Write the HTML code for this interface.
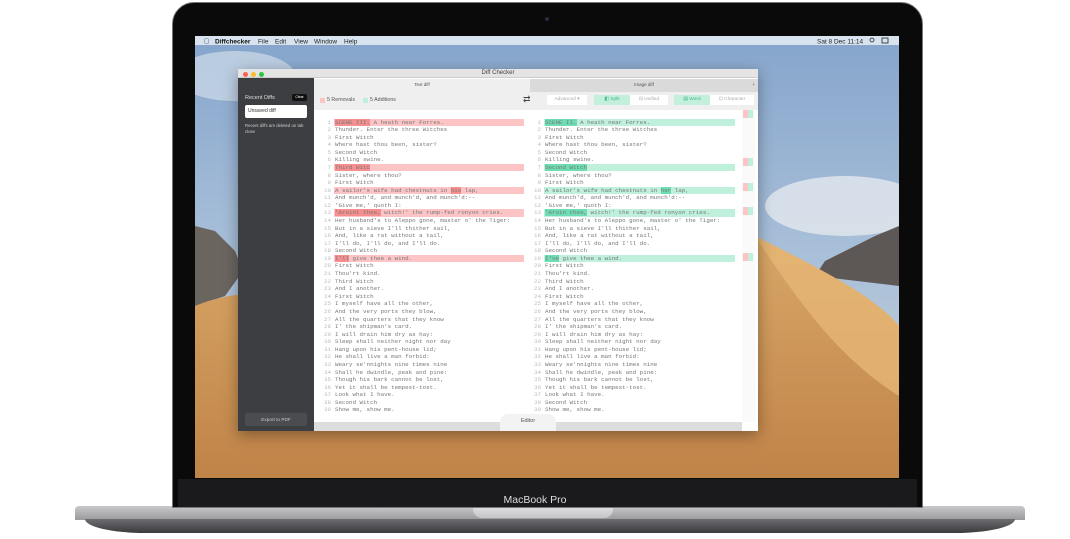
<!DOCTYPE html>
<html><head><meta charset="utf-8"><style>
*{margin:0;padding:0;box-sizing:border-box}
body{width:1070px;height:539px;background:#fff;position:relative;overflow:hidden;font-family:"Liberation Sans",sans-serif}
.a{position:absolute}
.code{font-family:"Liberation Mono",monospace;font-size:5.85px;color:#777;white-space:pre;line-height:7.58px}
.row{position:absolute;height:7.4px}
.rm{background:#fcc4c4}
.ad{background:#bff0dc}
.rs{background:#f58e8e}
.as{background:#6fddb4}
</style></head><body>
<div class="a" style="left:75px;top:506px;width:950px;height:14px;border-radius:4px 4px 0 0;background:linear-gradient(#c9c9cb,#9a9a9d)"></div>
<div class="a" style="left:85px;top:519px;width:930px;height:14px;border-radius:0 0 60px 60px/0 0 14px 14px;background:linear-gradient(#6e6e72,#3a3a3d)"></div>
<div class="a" style="left:473px;top:506px;width:140px;height:12px;border-radius:0 0 9px 9px;background:linear-gradient(#e2e2e4,#c4c4c6)"></div>
<div class="a" style="left:172px;top:2px;width:751px;height:506px;border-radius:22px 22px 0 0;background:#0a0a0a;border:1px solid #777"></div>
<div class="a" style="left:545px;top:17px;width:4px;height:4px;border-radius:50%;background:#2a2a40"></div>
<div class="a" style="left:178px;top:479px;width:739px;height:28px;background:#1a1a1c"></div>
<div class="a" style="left:0;top:494px;width:1070px;text-align:center;color:#ddd;font-size:10.5px">MacBook Pro</div>
<svg class="a" style="left:195px;top:36px" width="704" height="442" viewBox="0 0 704 442">
<defs>
<linearGradient id="sky" x1="0" y1="0" x2="0" y2="1"><stop offset="0" stop-color="#86a5cc"/><stop offset="0.5" stop-color="#a9c0d9"/><stop offset="1" stop-color="#c9cfd6"/></linearGradient>
<linearGradient id="dune" x1="0" y1="0" x2="0" y2="1"><stop offset="0" stop-color="#d8a767"/><stop offset="1" stop-color="#c08348"/></linearGradient>
</defs>
<rect width="704" height="442" fill="url(#sky)"/>
<ellipse cx="40" cy="40" rx="60" ry="25" fill="#cfdbe8" opacity=".7"/>
<ellipse cx="650" cy="170" rx="80" ry="30" fill="#e3e8ee" opacity=".8"/>
<polygon points="0,190 20,195 40,215 48,235 30,260 0,270" fill="#6b6560"/>
<polygon points="704,190 680,200 650,215 630,225 620,240 704,250" fill="#5d5856"/>
<path d="M0,270 C60,245 150,255 260,300 L560,200 C620,230 680,260 704,290 L704,442 L0,442Z" fill="url(#dune)"/>
<path d="M560,200 C600,260 640,320 704,360 L704,290 C680,260 620,230 560,200Z" fill="#e6b676" opacity=".8"/>
<rect y="0" width="704" height="9" fill="#d7e4ef"/>
<text x="9" y="7.5" font-size="7" fill="#111">&#63743;</text>
<text x="20" y="7.5" font-size="6.5" font-weight="bold" fill="#111" font-family="Liberation Sans">Diffchecker</text>
<text x="63" y="7.5" font-size="6.5" fill="#222" font-family="Liberation Sans">File</text>
<text x="80" y="7.5" font-size="6.5" fill="#222" font-family="Liberation Sans">Edit</text>
<text x="99" y="7.5" font-size="6.5" fill="#222" font-family="Liberation Sans">View</text>
<text x="119" y="7.5" font-size="6.5" fill="#222" font-family="Liberation Sans">Window</text>
<text x="149" y="7.5" font-size="6.5" fill="#222" font-family="Liberation Sans">Help</text>
<text x="622" y="7.5" font-size="6.5" fill="#222" font-family="Liberation Sans">Sat 8 Dec  11:14</text>
<circle cx="677" cy="4" r="2" fill="none" stroke="#222" stroke-width=".8"/>
<rect x="687" y="2" width="6" height="5" fill="none" stroke="#222" stroke-width=".8"/>
</svg>
<div class="a" style="left:238px;top:69px;width:520px;height:362px;background:#fff;box-shadow:0 4px 14px rgba(0,0,0,.35)"></div>
<div class="a" style="left:238px;top:69px;width:520px;height:9px;background:#e4e4e4;border-bottom:1px solid #ccc;font-size:6px;color:#444;text-align:center;line-height:9px">Diff Checker</div>
<div class="a" style="left:243px;top:71.5px;width:5px;height:5px;border-radius:50%;background:#fc5f57"></div>
<div class="a" style="left:251px;top:71.5px;width:5px;height:5px;border-radius:50%;background:#fdbc2e"></div>
<div class="a" style="left:259px;top:71.5px;width:5px;height:5px;border-radius:50%;background:#29c940"></div>
<div class="a" style="left:238px;top:78px;width:76px;height:353px;background:#3c3e41"></div>
<div class="a" style="left:245px;top:95px;font-size:5.5px;color:#ddd">Recent Diffs</div>
<div class="a" style="left:292px;top:94px;width:15px;height:7px;border-radius:2px;background:#111;color:#fff;font-size:3.5px;text-align:center;line-height:7px">Clear</div>
<div class="a" style="left:245px;top:105px;width:62px;height:13px;border-radius:2px;background:#fff;font-size:5px;color:#333;padding:3px 3px;line-height:7px">Unsaved diff</div>
<div class="a" style="left:245px;top:123px;width:66px;font-size:4.3px;color:#ccc;line-height:6px">Recent diffs are deleted on tab close</div>
<div class="a" style="left:245px;top:413px;width:62px;height:13px;border-radius:2px;background:#4a4c4f;font-size:4.7px;color:#ccc;text-align:center;line-height:13px">Export to PDF</div>
<div class="a" style="left:314px;top:79px;width:216px;height:13px;background:#efefef;font-size:4.5px;color:#555;text-align:center;line-height:11px">Text diff</div>
<div class="a" style="left:530px;top:79px;width:228px;height:13px;background:#dadada;font-size:4.5px;color:#555;text-align:center;line-height:11px">Image diff<span style="position:absolute;right:3px">+</span></div>
<div class="a" style="left:314px;top:92px;width:444px;height:18px;background:#efefef"></div>
<div class="a" style="left:320px;top:98px;width:5px;height:5px;background:#fcc4c4"></div>
<div class="a" style="left:327px;top:97px;font-size:5.3px;color:#555">5 Removals</div>
<div class="a" style="left:363px;top:98px;width:5px;height:5px;background:#bff0dc"></div>
<div class="a" style="left:370px;top:97px;font-size:5.3px;color:#555">5 Additions</div>
<div class="a" style="left:523px;top:94px;font-size:9px;color:#444">&#8644;</div>
<div class="a" style="left:547px;top:95px;width:40px;height:10px;background:#fff;font-size:4.8px;color:#aaa;text-align:center;line-height:10px">Advanced ▾</div>
<div class="a" style="left:594px;top:95px;width:36px;height:10px;background:#c4efdd;font-size:4.8px;color:#3cb88a;text-align:center;line-height:10px">◧ Split</div>
<div class="a" style="left:630px;top:95px;width:38px;height:10px;background:#fff;font-size:4.8px;color:#aaa;text-align:center;line-height:10px">⊟ Unified</div>
<div class="a" style="left:674px;top:95px;width:36px;height:10px;background:#c4efdd;font-size:4.8px;color:#3cb88a;text-align:center;line-height:10px">▤ Word</div>
<div class="a" style="left:710px;top:95px;width:44px;height:10px;background:#fff;font-size:4.8px;color:#aaa;text-align:center;line-height:10px">⊡ Character</div>
<div class="row rm" style="left:334px;top:118.5px;width:190px"></div>
<div class="row rm" style="left:334px;top:164px;width:190px"></div>
<div class="row rm" style="left:334px;top:186.7px;width:190px"></div>
<div class="row rm" style="left:334px;top:209.4px;width:190px"></div>
<div class="row rm" style="left:334px;top:254.9px;width:190px"></div>
<div class="row ad" style="left:544px;top:118.5px;width:191px"></div>
<div class="row ad" style="left:544px;top:164px;width:191px"></div>
<div class="row ad" style="left:544px;top:186.7px;width:191px"></div>
<div class="row ad" style="left:544px;top:209.4px;width:191px"></div>
<div class="row ad" style="left:544px;top:254.9px;width:191px"></div>
<div class="a" style="left:742px;top:110px;width:13px;height:312px;background:#fafafa"></div>
<div class="a rm" style="left:743px;top:110px;width:5px;height:8px"></div><div class="a ad" style="left:748px;top:110px;width:5px;height:8px"></div>
<div class="a rm" style="left:743px;top:158px;width:5px;height:8px"></div><div class="a ad" style="left:748px;top:158px;width:5px;height:8px"></div>
<div class="a rm" style="left:743px;top:183px;width:5px;height:8px"></div><div class="a ad" style="left:748px;top:183px;width:5px;height:8px"></div>
<div class="a rm" style="left:743px;top:207px;width:5px;height:8px"></div><div class="a ad" style="left:748px;top:207px;width:5px;height:8px"></div>
<div class="a rm" style="left:743px;top:253px;width:5px;height:8px"></div><div class="a ad" style="left:748px;top:253px;width:5px;height:8px"></div>
<div class="a code" style="left:318px;top:118.5px;width:13px;text-align:right;color:#bbb">1
2
3
4
5
6
7
8
9
10
11
12
13
14
15
16
17
18
19
20
21
22
23
24
25
26
27
28
29
30
31
32
33
34
35
36
37
38
39</div>
<div class="a code" style="left:335px;top:118.5px"><span class="rs">SCENE III.</span> A heath near Forres.
Thunder. Enter the three Witches
First Witch
Where hast thou been, sister?
Second Witch
Killing swine.
<span class="rs">Third Witc</span>
Sister, where thou?
First Witch
A sailor's wife had chestnuts in <span class="rs">his</span> lap,
And munch'd, and munch'd, and munch'd:--
'Give me,' quoth I:
<span class="rs">'Aroint thee,</span> witch!' the rump-fed ronyon cries.
Her husband's to Aleppo gone, master o' the Tiger:
But in a sieve I'll thither sail,
And, like a rat without a tail,
I'll do, I'll do, and I'll do.
Second Witch
<span class="rs">I'll</span> give thee a wind.
First Witch
Thou'rt kind.
Third Witch
And I another.
First Witch
I myself have all the other,
And the very ports they blow,
All the quarters that they know
I' the shipman's card.
I will drain him dry as hay:
Sleep shall neither night nor day
Hang upon his pent-house lid;
He shall live a man forbid:
Weary se'nnights nine times nine
Shall he dwindle, peak and pine:
Though his bark cannot be lost,
Yet it shall be tempest-tost.
Look what I have.
Second Witch
Show me, show me.</div>
<div class="a code" style="left:528px;top:118.5px;width:13px;text-align:right;color:#bbb">1
2
3
4
5
6
7
8
9
10
11
12
13
14
15
16
17
18
19
20
21
22
23
24
25
26
27
28
29
30
31
32
33
34
35
36
37
38
39</div>
<div class="a code" style="left:545px;top:118.5px"><span class="as">SCENE II.</span> A heath near Forres.
Thunder. Enter the three Witches
First Witch
Where hast thou been, sister?
Second Witch
Killing swine.
<span class="as">Second Witch</span>
Sister, where thou?
First Witch
A sailor's wife had chestnuts in <span class="as">her</span> lap,
And munch'd, and munch'd, and munch'd:--
'Give me,' quoth I:
<span class="as">'Aroin thee,</span> witch!' the rump-fed ronyon cries.
Her husband's to Aleppo gone, master o' the Tiger:
But in a sieve I'll thither sail,
And, like a rat without a tail,
I'll do, I'll do, and I'll do.
Second Witch
<span class="as">I've</span> give thee a wind.
First Witch
Thou'rt kind.
Third Witch
And I another.
First Witch
I myself have all the other,
And the very ports they blow,
All the quarters that they know
I' the shipman's card.
I will drain him dry as hay:
Sleep shall neither night nor day
Hang upon his pent-house lid;
He shall live a man forbid:
Weary se'nnights nine times nine
Shall he dwindle, peak and pine:
Though his bark cannot be lost,
Yet it shall be tempest-tost.
Look what I have.
Second Witch
Show me, show me.</div>
<div class="a" style="left:314px;top:422px;width:428px;height:9px;background:#ddd"></div>
<div class="a" style="left:500px;top:414px;width:56px;height:17px;background:#f3f3f3;border-radius:8px 8px 0 0;font-size:5.5px;color:#555;text-align:center;line-height:14px">Editor</div>
</body></html>
